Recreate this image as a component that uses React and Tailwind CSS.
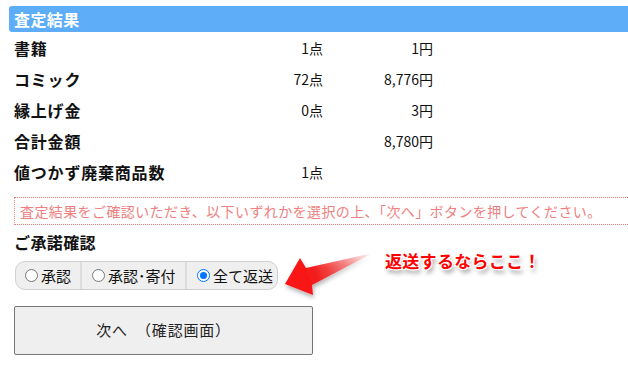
import React from 'react';

const rows = [
  { label: '書籍', count: '1点', yen: '1円' },
  { label: 'コミック', count: '72点', yen: '8,776円' },
  { label: '縁上げ金', count: '0点', yen: '3円' },
  { label: '合計金額', count: '', yen: '8,780円' },
  { label: '値つかず廃棄商品数', count: '1点', yen: '' },
];

const options = [
  { label: '承認', checked: false, w: 'w-[64px]' },
  { label: '承認･寄付', checked: false, w: 'w-[105px]' },
  { label: '全て返送', checked: true, w: 'flex-1' },
];

function Radio({ checked }) {
  if (checked) {
    return (
      <span className="w-[13px] h-[13px] rounded-full border-[1.5px] border-[#0075ff] bg-white flex items-center justify-center shrink-0">
        <span className="w-[7px] h-[7px] rounded-full bg-[#0075ff]" />
      </span>
    );
  }
  return <span className="w-[13px] h-[13px] rounded-full border border-[#767676] bg-white shrink-0" />;
}

export default function App() {
  return (
    <div
      className="relative w-[628px] h-[377px] bg-white overflow-hidden text-[#111]"
      style={{ fontFamily: '"Noto Sans CJK JP", "Noto Sans", sans-serif' }}
    >
      {/* Header */}
      <div className="mt-[6px] ml-[9px] h-[26px] bg-[#5dadf8] rounded-l-[3px] pl-[5px] flex items-center text-white text-[16px] font-bold leading-none tracking-[0.4px]">
        査定結果
      </div>

      {/* Result table */}
      <div className="ml-[14px]">
        {rows.map((r) => (
          <div key={r.label} className="h-[31px] flex items-center">
            <div className="w-[249px] text-[16px] font-bold leading-none tracking-[0.8px]">{r.label}</div>
            <div className="w-[60px] text-right text-[14px] leading-none">{r.count}</div>
            <div className="w-[110px] text-right text-[14px] leading-none">{r.yen}</div>
          </div>
        ))}
      </div>

      {/* Notice */}
      <div className="ml-[14px] mt-[10px] h-[28px] border border-dotted border-[#f08080] border-r-0 pl-[5px] flex items-center text-[14px] text-[#f08080] whitespace-nowrap leading-none tracking-[0.4px]">
        査定結果をご確認いただき、以下いずれかを選択の上、「次へ」ボタンを押してください。
      </div>

      {/* Consent */}
      <div className="ml-[14px] mt-[9px] text-[16px] font-bold leading-none tracking-[0.4px]">ご承諾確認</div>

      <div className="ml-[15px] mt-[11px] w-[263px] h-[29px] flex rounded-[10px] border border-[#d0d0d0] bg-[#efefef] overflow-hidden">
        {options.map((o, i) => (
          <div
            key={o.label}
            className={`${o.w} h-full flex items-center gap-[3px] ${i === 0 ? 'pl-[9px]' : 'pl-[10px] border-l-2 border-[#dcdcdc]'}`}
          >
            <Radio checked={o.checked} />
            <span className="text-[15px] leading-none text-[#111]">{o.label}</span>
          </div>
        ))}
      </div>

      {/* Next button */}
      <div className="ml-[14px] mt-[16px] w-[299px] h-[49px] rounded-[2px] border border-[#767676] bg-[#efefef] flex items-center justify-center text-[15px] text-[#222] tracking-[0.8px]">
        次へ　（確認画面）
      </div>

      {/* Annotation */}
      <svg className="absolute left-[270px] top-[245px]" width="120" height="60" viewBox="270 245 120 60">
        <defs>
          <linearGradient id="arr" x1="285" y1="284" x2="372" y2="254" gradientUnits="userSpaceOnUse">
            <stop offset="0" stopColor="#ff1111" />
            <stop offset="0.35" stopColor="#f41c1c" />
            <stop offset="1" stopColor="#f41c1c" stopOpacity="0" />
          </linearGradient>
          <filter id="sh" x="-20%" y="-20%" width="140%" height="160%">
            <feDropShadow dx="1" dy="3" stdDeviation="2" floodColor="#000" floodOpacity="0.3" />
          </filter>
        </defs>
        <polygon
          points="285,284 300,258 306,268 373,253 312,285 313,295"
          fill="url(#arr)"
          filter="url(#sh)"
        />
      </svg>
      <div
        className="absolute left-[385px] top-[252px] text-[17px] font-bold text-[#ff0000] leading-none whitespace-nowrap tracking-[0.3px]"
        style={{
          textShadow:
            '1px 0 0 #fff, -1px 0 0 #fff, 0 1px 0 #fff, 0 -1px 0 #fff, 1px 1px 0 #fff, -1px -1px 0 #fff, 1px -1px 0 #fff, -1px 1px 0 #fff, 2px 4px 4px rgba(0,0,0,0.4)',
        }}
      >
        返送するならここ！
      </div>
    </div>
  );
}
